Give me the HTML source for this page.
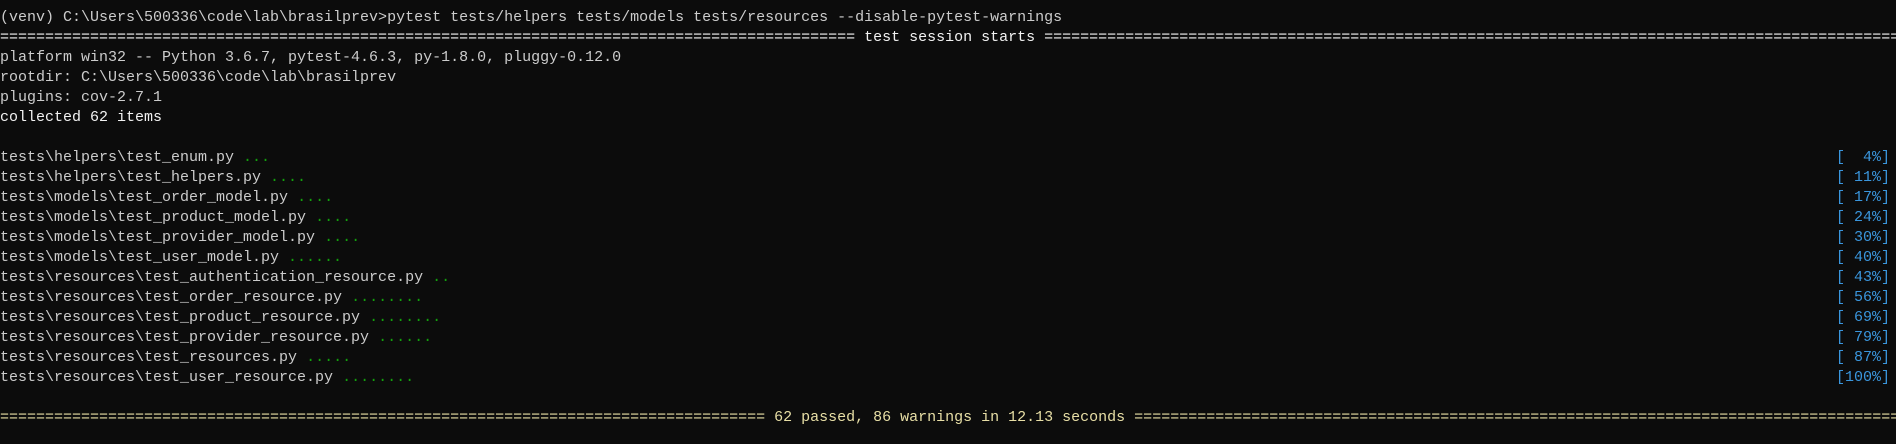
<!DOCTYPE html>
<html><head><meta charset="utf-8"><style>
html,body{margin:0;padding:0;background:#0c0c0c;width:1896px;height:444px;overflow:hidden}
pre{margin:0;padding:8px 0 0 0;font-family:"Liberation Mono",monospace;font-size:15px;line-height:20px;color:#cccccc;white-space:pre;width:1896px;overflow:hidden}
.w{color:#f2f2f2}
.g{color:#13a10e}
.c{color:#3a96dd;float:right;margin-right:6px}
.y{color:#e8dfa6}
.l{display:block;height:20px;overflow:hidden}
</style></head><body><pre><span class="l">(venv) C:\Users\500336\code\lab\brasilprev&gt;pytest tests/helpers tests/models tests/resources --disable-pytest-warnings</span><span class="l w">=============================================================================================== test session starts ================================================================================================</span><span class="l">platform win32 -- Python 3.6.7, pytest-4.6.3, py-1.8.0, pluggy-0.12.0</span><span class="l">rootdir: C:\Users\500336\code\lab\brasilprev</span><span class="l">plugins: cov-2.7.1</span><span class="l w">collected 62 items</span><span class="l"> </span><span class="l">tests\helpers\test_enum.py <span class="g">...</span><span class="c">[  4%]</span></span><span class="l">tests\helpers\test_helpers.py <span class="g">....</span><span class="c">[ 11%]</span></span><span class="l">tests\models\test_order_model.py <span class="g">....</span><span class="c">[ 17%]</span></span><span class="l">tests\models\test_product_model.py <span class="g">....</span><span class="c">[ 24%]</span></span><span class="l">tests\models\test_provider_model.py <span class="g">....</span><span class="c">[ 30%]</span></span><span class="l">tests\models\test_user_model.py <span class="g">......</span><span class="c">[ 40%]</span></span><span class="l">tests\resources\test_authentication_resource.py <span class="g">..</span><span class="c">[ 43%]</span></span><span class="l">tests\resources\test_order_resource.py <span class="g">........</span><span class="c">[ 56%]</span></span><span class="l">tests\resources\test_product_resource.py <span class="g">........</span><span class="c">[ 69%]</span></span><span class="l">tests\resources\test_provider_resource.py <span class="g">......</span><span class="c">[ 79%]</span></span><span class="l">tests\resources\test_resources.py <span class="g">.....</span><span class="c">[ 87%]</span></span><span class="l">tests\resources\test_user_resource.py <span class="g">........</span><span class="c">[100%]</span></span><span class="l"> </span><span class="l y">===================================================================================== 62 passed, 86 warnings in 12.13 seconds ======================================================================================</span></pre></body></html>
